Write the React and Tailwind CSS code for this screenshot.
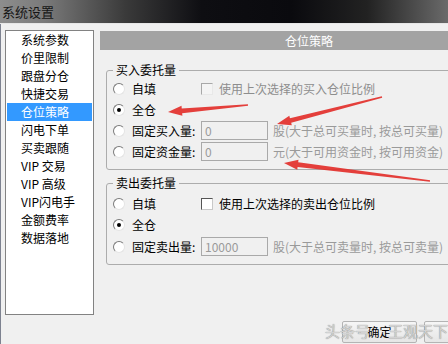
import React from 'react';

const menu = [
  '系统参数', '价里限制', '跟盘分仓', '快捷交易', '仓位策略', '闪电下单',
  '买卖跟随', 'VIP 交易', 'VIP 高级', 'VIP闪电手', '金额费率', '数据落地',
];

const Radio = ({ checked = false }) => (
  <span className="w-[12px] h-[12px] shrink-0 rounded-full border border-t-[#7a7a7a] border-l-[#7a7a7a] border-r-[#e4e4e4] border-b-[#e4e4e4] bg-white flex items-center justify-center">
    {checked && <span className="w-[4px] h-[4px] rounded-full bg-black" />}
  </span>
);

const Check = ({ disabled = false }) => (
  <span
    className={`w-[12px] h-[12px] shrink-0 border ${
      disabled
        ? 'border-t-[#a8a8a8] border-l-[#a8a8a8] border-r-[#e8e8e8] border-b-[#e8e8e8] bg-[#f4f4f4]'
        : 'border-t-[#555] border-l-[#555] border-r-[#c8c8c8] border-b-[#c8c8c8] bg-white'
    }`}
  />
);

const Field = ({ value }) => (
  <span className="w-[67px] h-[19px] shrink-0 border border-[#a9a9a9] bg-[#f0f0f0] text-[#9a9a9a] text-[12px] leading-[17px] pl-[3px]">
    {value}
  </span>
);

const Row = ({ checked, label, children, tall }) => (
  <div className={`flex items-center ${tall ? 'h-[23px]' : 'h-[21px]'}`}>
    <div className="w-[88px] flex items-center gap-[7px] shrink-0">
      <Radio checked={checked} />
      <span>{label}</span>
    </div>
    {children}
  </div>
);

// tapered red annotation arrow
const arrowPts = (tip, tail) => {
  const dx = tail[0] - tip[0];
  const dy = tail[1] - tip[1];
  const len = Math.hypot(dx, dy);
  const ux = dx / len, uy = dy / len;
  const nx = -uy, ny = ux;
  const b = [tip[0] + ux * 14, tip[1] + uy * 14];
  const p = (base, w) => [base[0] + nx * w, base[1] + ny * w];
  const pts = [
    tip, p(b, 5), p(b, 2.4), p(tail, 0.7), p(tail, -0.7), p(b, -2.4), p(b, -5),
  ];
  return pts.map((q) => q.join(',')).join(' ');
};

export default function App() {
  return (
    <div className="relative w-[448px] h-[344px] overflow-hidden flex flex-col bg-[#f0f0f0] text-[12px] text-black font-['Noto_Sans_CJK_SC',sans-serif]">
      {/* title bar */}
      <div className="h-[23px] shrink-0 flex items-center pl-[2px] bg-[linear-gradient(90deg,#8d8d8d_0%,#7a7a7a_10%,#3a3a3a_28%,#0e0e12_45%,#0a0a0e_65%,#222_82%,#6a6a6a_100%)]">
        <span className="text-[#151515] text-[13px] leading-none">系统设置</span>
      </div>
      <div className="h-px shrink-0 bg-[#e6e6e6]" />

      <div className="flex-1 flex gap-[6px] pl-[4px] pt-[6px] border-l border-[#7d8290]">
        {/* left menu */}
        <div className="w-[89px] h-[285px] shrink-0 bg-white border border-[#828282] px-px">
          {menu.map((m) => (
            <div
              key={m}
              className={`h-[18px] leading-[18px] pl-[14px] whitespace-nowrap ${
                m === '仓位策略' ? 'bg-[#3399ff] text-white' : ''
              }`}
            >
              {m}
            </div>
          ))}
        </div>

        {/* right panel */}
        <div className="w-[418px] shrink-0 flex flex-col">
          <div className="h-[19px] mt-px bg-[#a3a3a3] text-white text-center leading-[19px]">仓位策略</div>

          <fieldset className="mx-[6px] mt-[12px] border border-[#acacac] rounded-[3px] px-[6px] pb-[7px]">
            <legend className="px-[3px] leading-[16px]">买入委托量</legend>
            <Row label="自填">
              <Check disabled />
              <span className="ml-[6px] text-[#8d8d8d]">使用上次选择的买入仓位比例</span>
            </Row>
            <Row checked label="全仓" />
            <Row label="固定买入量:">
              <Field value="0" />
              <span className="ml-[5px] text-[#9a9a9a] whitespace-nowrap">股(大于总可买量时, 按总可买量)</span>
            </Row>
            <Row label="固定资金量:">
              <Field value="0" />
              <span className="ml-[5px] text-[#9a9a9a] whitespace-nowrap">元(大于可用资金时, 按可用资金)</span>
            </Row>
          </fieldset>

          <fieldset className="mx-[6px] mt-[5px] border border-[#acacac] rounded-[3px] px-[6px] pt-[2px] pb-[6px]">
            <legend className="px-[3px] leading-[16px]">卖出委托量</legend>
            <Row label="自填">
              <Check />
              <span className="ml-[6px]">使用上次选择的卖出仓位比例</span>
            </Row>
            <Row checked label="全仓" />
            <Row tall label="固定卖出量:">
              <Field value="10000" />
              <span className="ml-[5px] text-[#9a9a9a] whitespace-nowrap">股(大于总可卖量时, 按总可卖量)</span>
            </Row>
          </fieldset>

          <div className="flex gap-[7px] mt-[56px] ml-[242px]">
            <button className="w-[75px] h-[22px] border border-[#b4b4b4] rounded-[2px] bg-[linear-gradient(#f6f6f6,#e6e6e6)] text-[12px]">确定</button>
            <button className="w-[75px] h-[22px] border border-[#b4b4b4] rounded-[2px] bg-[linear-gradient(#f6f6f6,#e6e6e6)] text-[12px]">取消</button>
          </div>
        </div>
      </div>

      {/* annotation arrows */}
      <svg className="absolute inset-0 pointer-events-none" width="448" height="344">
        <g fill="#e3302c" opacity="0.92">
          <polygon points={arrowPts([168, 112], [248, 105])} />
          <polygon points={arrowPts([277, 124], [382, 97])} />
          <polygon points={arrowPts([284, 163], [430, 181])} />
        </g>
      </svg>

      {/* watermark */}
      <div className="absolute left-[325px] top-[321px] flex gap-[18px] text-[15px] leading-[20px] text-[#d2d2d2] [text-shadow:0_0_1px_#6f6f6f] pointer-events-none">
        <span>头条号</span>
        <span>王观天下</span>
      </div>
    </div>
  );
}
